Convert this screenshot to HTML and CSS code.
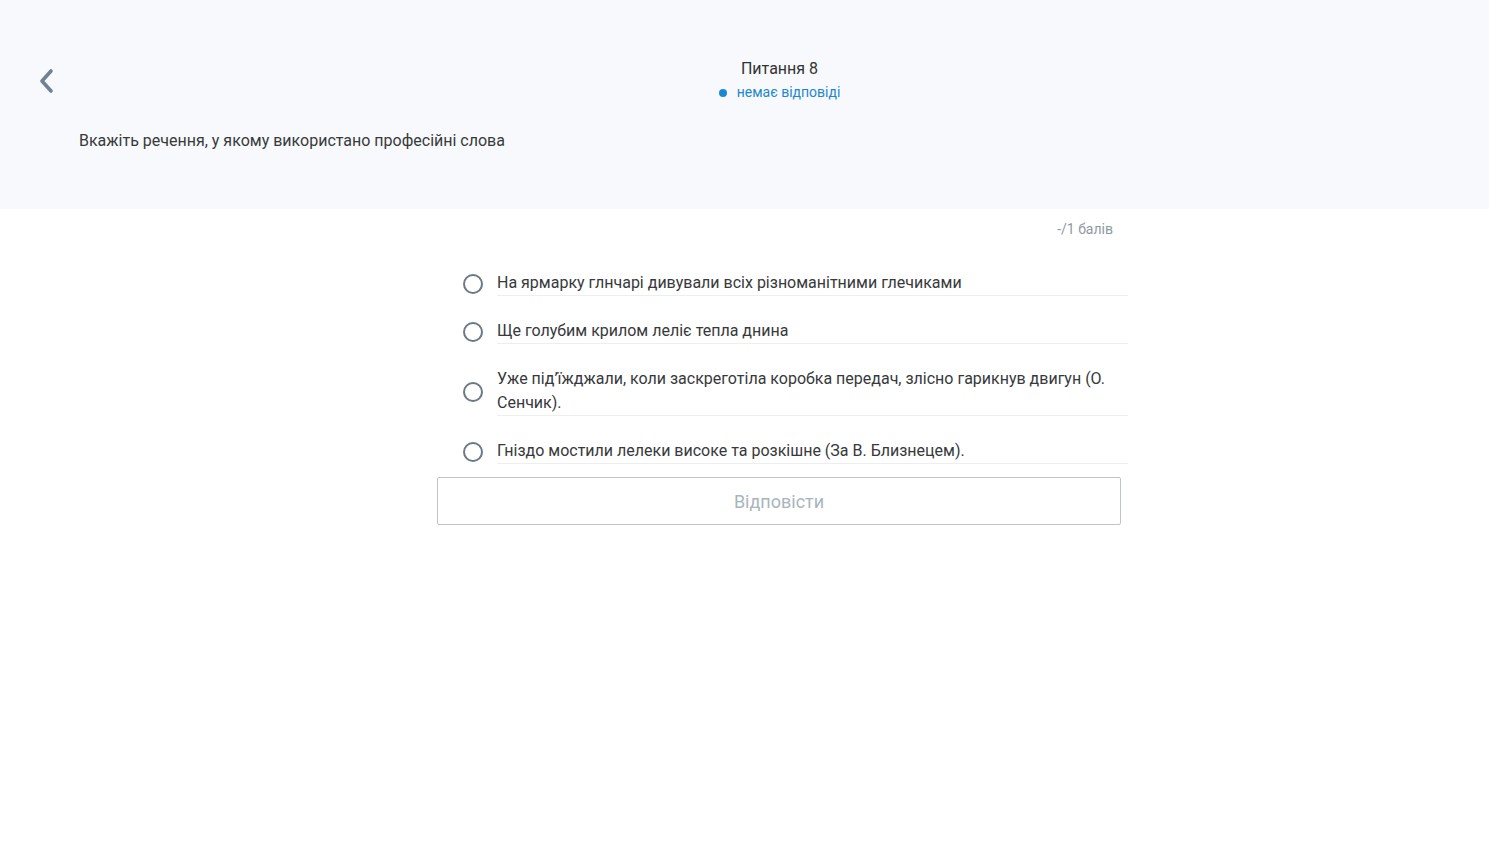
FILE: index.html
```html
<!DOCTYPE html>
<html lang="uk">
<head>
<meta charset="utf-8">
<title>Питання 8</title>
<link rel="stylesheet" href="styles.css">
</head>
<body>
<header class="head">
  <div class="head-top">
    <button class="back" aria-label="Назад">
      <svg width="18" height="26" viewBox="0 0 18 26"><path d="M14 3 L5 13 L14 23" fill="none" stroke="#6e8291" stroke-width="3.6" stroke-linecap="round" stroke-linejoin="round"/></svg>
    </button>
    <div class="title-block">
      <div class="title">Питання 8</div>
      <div class="status"><span class="dot"></span>немає відповіді</div>
    </div>
  </div>
  <p class="question">Вкажіть речення, у якому використано професійні слова</p>
</header>
<main class="content">
  <div class="points">-/1 балів</div>
  <ul class="options">
    <li class="option"><span class="radio"></span><span class="opt-text">На ярмарку глнчарі дивували всіх різноманітними глечиками</span></li>
    <li class="option"><span class="radio"></span><span class="opt-text">Ще голубим крилом леліє тепла днина</span></li>
    <li class="option"><span class="radio"></span><span class="opt-text">Уже під’їжджали, коли заскреготіла коробка передач, злісно гарикнув двигун (О. Сенчик).</span></li>
    <li class="option"><span class="radio"></span><span class="opt-text">Гніздо мостили лелеки високе та розкішне (За В. Близнецем).</span></li>
  </ul>
  <button class="submit">Відповісти</button>
</main>
</body>
</html>
```
FILE: styles.css
```css
* { box-sizing: border-box; }
html, body { margin: 0; padding: 0; background: #fff; }
body {
  font-family: Roboto, "Noto Sans", "Liberation Sans", sans-serif;
  color: #37393b;
}
.head {
  background: #f7f9fc;
  height: 209px;
  padding-top: 58px;
}
.head-top {
  display: flex;
  align-items: flex-start;
  position: relative;
  justify-content: center;
}
.back {
  position: absolute;
  left: 37px;
  top: 10px;
  border: 0;
  background: none;
  padding: 0;
  cursor: pointer;
  line-height: 0;
}
.title-block {
  display: flex;
  flex-direction: column;
  align-items: center;
  margin-left: 70px;
}
.title {
  font-size: 16px;
  line-height: 22px;
  color: #333;
}
.status {
  font-size: 14px;
  line-height: 20px;
  color: #1e88cf;
  display: flex;
  align-items: center;
  margin-top: 2px;
}
.dot {
  width: 8px;
  height: 8px;
  border-radius: 50%;
  background: #1e88cf;
  margin-right: 10px;
  margin-top: 1px;
}
.question {
  margin: 28px 0 0 79px;
  font-size: 16px;
  line-height: 22px;
  color: #37393b;
}
.content {
  width: 684px;
  margin: 0 0 0 437px;
  display: flex;
  flex-direction: column;
}
.points {
  align-self: flex-end;
  margin-right: 8px;
  margin-top: 11px;
  font-size: 14px;
  line-height: 18px;
  color: #8e999f;
}
.options {
  list-style: none;
  margin: 10px 0 0 26px;
  padding: 0;
  width: 665px;
}
.option {
  display: flex;
  align-items: center;
  padding-top: 23px;
}
.radio {
  flex: none;
  width: 20px;
  height: 20px;
  border: 2px solid #6b7983;
  border-radius: 50%;
  margin-right: 14px;
}
.opt-text {
  flex: 1;
  font-size: 16px;
  line-height: 24px;
  border-bottom: 1px solid #eceef0;
  color: #37393b;
}
.submit {
  margin-top: 13px;
  height: 48px;
  width: 684px;
  background: #fff;
  border: 1px solid #bfc4c7;
  border-radius: 2px;
  font-family: Roboto, "Noto Sans", "Liberation Sans", sans-serif;
  font-size: 18px;
  color: #a9b5bc;
}
```
